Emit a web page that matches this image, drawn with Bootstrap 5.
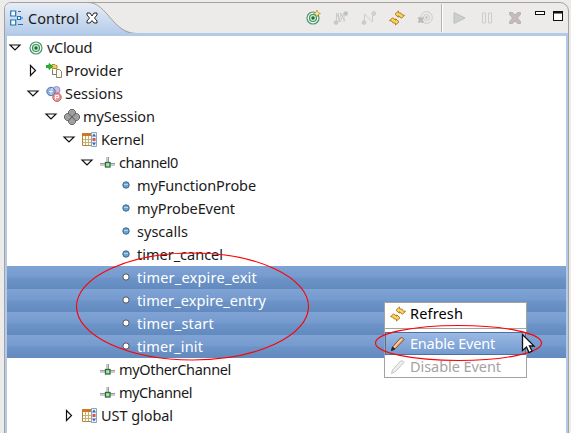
<!DOCTYPE html>
<html lang="en">
<head>
<meta charset="utf-8">
<title>Control</title>
<link href="https://cdn.jsdelivr.net/npm/bootstrap@5.3.0/dist/css/bootstrap.min.css" rel="stylesheet">
<style>
body{width:571px;height:433px;overflow:hidden;background:#edebe9;font:14.5px/23px "Noto Sans","Open Sans",sans-serif;color:#1a1a1a}
svg{display:block;flex:none;overflow:visible}
.frame{width:565px;height:440px;margin:2px 0 0 4px;border:1px solid #a5a19d;border-radius:7px 9px 0 0;overflow:hidden}
.head{height:30px;width:563px}
.tabshape{left:0;top:0}
.tabtext{height:30px;padding:0 0 0 5px}
.tabtext span{margin-left:5px;width:54px}
.tools{padding:0 5px 0 0}
.tools>svg{margin-left:12px}
.sep{width:2px;height:28px;background:#b5b2af;border-right:1px solid #fff;margin:1px 0 0 8px}
.view{border:2px solid #b3c9e8;border-top-width:3px;border-bottom:0;background:#fff;height:410px}
.tree-row{height:23px}
.arrow{width:16px;height:16px;margin-right:5px}
.tree-row span{margin-left:3px;white-space:pre}
.l1{padding-left:18px}.l2{padding-left:36px}.l3{padding-left:54px}.l4{padding-left:72px}.l5{padding-left:90px}
.picked{background:linear-gradient(#80a3d5,#759acd 48%,#6d94c8 52%,#628abf);color:#fff}
.popup{left:384px;top:302px;width:143px;height:76px;background:#fff;border:1px solid #a3a3a3}
.popup .entry{height:23px;padding-left:5px}
.popup .entry:first-child{padding-bottom:2px}
.popup span{margin-left:4px;white-space:pre}
.rule{height:1px;background:#a3a3a3;margin:2px 0 3px}
.hot{background:linear-gradient(#9dbbe5,#7199cf);box-shadow:inset 0 0 0 1px #4d719f;color:#fff}
.dim{color:#a6a39f}
.marks{left:0;top:0;pointer-events:none}
</style>
<script src="https://cdn.jsdelivr.net/npm/bootstrap@5.3.0/dist/js/bootstrap.bundle.min.js"></script>
</head>
<body>
<svg width="0" height="0" class="position-absolute">
<defs>
<linearGradient id="tabfill" x2="0" y2="1"><stop offset="0" stop-color="#e6edf6"/><stop offset="1" stop-color="#b0c8e8"/></linearGradient>
<symbol id="open" viewBox="0 0 16 16"><path d="M3 5H13L8 10Z" fill="#fff" stroke="#111" stroke-width="1.2"/></symbol>
<symbol id="shut" viewBox="0 0 16 16"><path d="M5.500 2.500V12.500L10.500 7.500Z" fill="#fff" stroke="#111" stroke-width="1.2"/></symbol>
<symbol id="target" viewBox="0 0 16 16"><circle cx="8" cy="8" r="6" fill="#f4faf5" stroke="#46976a" stroke-width="1.200"/><circle cx="8" cy="8" r="3.500" fill="#d8ebd3" stroke="#3d9161" stroke-width="1.200"/><circle cx="8" cy="8" r="1.700" fill="#176d2b"/></symbol>
<symbol id="provider" viewBox="0 0 16 16"><path d="M6 1.500h3l1 1h1v3H6Z" fill="#f4cc5e" stroke="#b68a28"/><path d="M0 2.500h3V.5l3.500 3-3.500 3v-2H0Z" fill="#21c426" stroke="#128117" stroke-width=".7"/><path d="M6.500 6.500v5H10" fill="none" stroke="#777"/><path d="M10.500 6.500h3l2 2v6h-5Z" fill="#fbfbf0" stroke="#8a8870"/></symbol>
<symbol id="sessions" viewBox="0 0 16 16"><circle cx="10.500" cy="4" r="3.500" fill="#cdbde5" stroke="#9f8bc8"/><circle cx="5" cy="5.500" r="4.200" fill="#91b0df" stroke="#5276b3"/><path d="M3 5.500h4M5 3h2M5 3.500v5" stroke="#e7effb" fill="none"/><circle cx="11" cy="11.200" r="4.200" fill="#e99c99" stroke="#c75c5d"/><path d="M9.500 13.500V9.500h3v2h-3" fill="none" stroke="#fff"/></symbol>
<symbol id="session" viewBox="0 0 16 16"><g fill="#a0a0a0" stroke="#686868"><path d="M6.500.5h3l2 2v2.500L8 8 4.500 5V2.500ZM6.500 15.500h3l2-2V11L8 8l-3.500 3v2.500ZM.5 6.500v3l2 2H5L8 8 5 4.500H2.500ZM15.500 6.500v3l-2 2H11L8 8l3-3.500h2.500Z"/></g></symbol>
<symbol id="domain" viewBox="0 0 16 16"><path d="M.5 1.500h9v12h-9Z" fill="#fffbe6" stroke="#ad873d"/><path d="M0 1h9v3H0Z" fill="#ca7926"/><path d="M3.500 4v9M6.500 4v9M1 7.500h8M1 10.500h8" stroke="#c3b07f"/><path d="M9.500.5h5v14h-5Z" fill="#eaf4fd" stroke="#8ca6bd"/><path d="M12 1.500l2 3h-4ZM12 13.500l2-3h-4Z" fill="#3166b1"/><path d="M10.500 6h3v3h-3Z" fill="#e05045"/></symbol>
<symbol id="channel" viewBox="0 0 16 16"><path d="M0 8.500h15M0 10h15M7 2v8M8.500 2v8" stroke="#97979c" stroke-width="1"/><rect x="5.500" y="7.500" width="4.500" height="4.500" fill="#b7e2ae" stroke="#26713b" stroke-width="1.300"/></symbol>
<symbol id="event" viewBox="0 0 16 16"><circle cx="8" cy="7" r="3.200" fill="#6ea5cd" stroke="#37658d"/><path d="M6 6.500h4" stroke="#b4d7ec"/></symbol>
<symbol id="idle" viewBox="0 0 16 16"><circle cx="8" cy="7" r="3.100" fill="#fff" stroke="#555"/></symbol>
<symbol id="refresh" viewBox="0 0 16 16"><g fill="#fad566" stroke="#b27c1a"><path d="M6 4.200L9.500 1V2.700Q13 2.700 13.500 5.200H15.500L12.500 8.200 9.300 5.700V7.200Z"/><path d="M10 11.800L6.500 15V13.300Q3 13.300 2.500 10.800H.5L3.500 7.800 6.700 10.300V8.800Z"/></g></symbol>
<symbol id="pencil" viewBox="0 0 16 16"><path d="M2.500 11L10.500 2Q13 1 14 3.500L5.500 12.500 1.500 14.500Z" fill="#efb37b" stroke="#875027"/><path d="M4 11L12 2.500" stroke="#ffe0b7"/><path d="M1.500 14.500l1-3.500 2.500 2Z" fill="#182c52" stroke="#182c52"/></symbol>
<symbol id="graypencil" viewBox="0 0 16 16"><path d="M2.500 11L10.500 2Q13 1 14 3.500L5.500 12.500 1.500 14.500Z" fill="#eeeeec" stroke="#c4c4c2"/></symbol>
</defs></svg>

<main class="frame">
<header class="head position-relative d-flex justify-content-between">
<svg class="tabshape position-absolute" width="563" height="34"><path d="M0 0H83C105 0 105 30 134 30H563V34H0Z" fill="url(#tabfill)" stroke="none"/><path d="M83-.5C102-.5 108 30.500 131 30.500H563" fill="none" stroke="#a5a19d"/></svg>
<div class="tabtext position-relative d-flex align-items-center">
<svg width="13" height="16" fill="#fff" stroke="#1b74b2" stroke-width="1.200"><path d="M.7 1h5v5h-5ZM.7 10h5v5h-5ZM8 1.500h3M8 14.500h5M11 8h2M7.500 6.500h3v3h-3Z"/></svg>
<span data-w="51">Control</span>
<svg width="12" height="12" class="ms-1"><path d="M1 1h3l2 3 2-3h3v2L8.500 6 11 9v2H8L6 8.500 4 11H1V9l2.500-3L1 3Z" fill="#fff" stroke="#222"/></svg>
</div>
<div class="tools position-relative d-flex align-items-center">
<svg width="16" height="16"><use href="#target"/><path d="M12 0l1 2.500L15.500 3.500 13 4.500 12 7 11 4.500 8.500 3.500 11 2.500Z" fill="#fff2b0" stroke="#b89536" stroke-width=".8"/></svg>
<svg width="16" height="16" fill="none" stroke="#c6c8c6" stroke-width=".9"><path d="M3.500 13V3l3.500 9 4-9v9M5.500 3v6M7 3l5 8M8.500 3l-3 9"/><circle cx="3" cy="12.500" r="1.900" fill="#c6cac6"/><circle cx="12.800" cy="3.500" r="1.900" fill="#b8c0ba"/></svg>
<svg width="16" height="16" fill="none" stroke="#c8c8c6" stroke-width=".9"><path d="M3.500 13V4l8 8V3"/><circle cx="3" cy="12.500" r="1.900" fill="#ccc"/><circle cx="12.800" cy="3.500" r="1.900" fill="#dccfd0"/></svg>
<svg width="16" height="16"><use href="#refresh"/></svg>
<svg width="16" height="16" fill="none" stroke="#cbcac8"><circle cx="9.500" cy="7.500" r="5.800"/><circle cx="9.500" cy="7.500" r="3"/><circle cx="9.500" cy="7.500" r="1" fill="#c4c4c4"/><path d="M1.500 7.500l4.500 5M6 7.500l-4.500 5" stroke="#bdb8b7" stroke-width="2.500"/></svg>
<i class="sep align-self-start"></i>
<svg width="16" height="16" class="ms-2"><path d="M3 2.500V13.500L14 8Z" fill="#cbcfcd" stroke="#bbc0bd"/></svg>
<svg width="16" height="16" fill="#ebebe9" stroke="#cdcdcb"><path d="M3.500 3h3v10h-3ZM9.500 3h3v10h-3Z"/></svg>
<svg width="16" height="16"><path d="M2.500 2.500h3L8 5l2.500-2.500h3v2L10.500 8l3 3.500v2h-3L8 11l-2.500 2.500h-3v-2l3-3.500-3-3.500Z" fill="#c4bbbb" stroke="#b8b2b2"/></svg>
<svg width="10" height="16"><rect x=".5" y="1.500" width="9" height="3" fill="#fff" stroke="#111"/></svg>
<svg width="10" height="16" class="ms-2"><rect x=".5" y="1.500" width="9" height="9" fill="#fff" stroke="#111"/><path d="M0 2.500h10" stroke="#111" stroke-width="2"/></svg>
</div>
</header>
<section class="view position-relative">
<div class="tree-row d-flex align-items-center"><svg class="arrow"><use href="#open"/></svg><svg width="16" height="16"><use href="#target"/></svg><span data-w="45">vCloud</span></div>
<div class="tree-row d-flex align-items-center l1"><svg class="arrow"><use href="#shut"/></svg><svg width="16" height="16"><use href="#provider"/></svg><span data-w="58">Provider</span></div>
<div class="tree-row d-flex align-items-center l1"><svg class="arrow"><use href="#open"/></svg><svg width="16" height="16"><use href="#sessions"/></svg><span data-w="58">Sessions</span></div>
<div class="tree-row d-flex align-items-center l2"><svg class="arrow"><use href="#open"/></svg><svg width="16" height="16"><use href="#session"/></svg><span data-w="72">mySession</span></div>
<div class="tree-row d-flex align-items-center l3"><svg class="arrow"><use href="#open"/></svg><svg width="16" height="16"><use href="#domain"/></svg><span data-w="43">Kernel</span></div>
<div class="tree-row d-flex align-items-center l4"><svg class="arrow"><use href="#open"/></svg><svg width="16" height="16"><use href="#channel"/></svg><span data-w="59">channel0</span></div>
<div class="tree-row d-flex align-items-center l5"><i class="arrow"></i><svg width="16" height="16"><use href="#event"/></svg><span data-w="119">myFunctionProbe</span></div>
<div class="tree-row d-flex align-items-center l5"><i class="arrow"></i><svg width="16" height="16"><use href="#event"/></svg><span data-w="98">myProbeEvent</span></div>
<div class="tree-row d-flex align-items-center l5"><i class="arrow"></i><svg width="16" height="16"><use href="#event"/></svg><span data-w="51">syscalls</span></div>
<div class="tree-row d-flex align-items-center l5"><i class="arrow"></i><svg width="16" height="16"><use href="#event"/></svg><span data-w="86">timer_cancel</span></div>
<div class="tree-row d-flex align-items-center l5 picked"><i class="arrow"></i><svg width="16" height="16"><use href="#idle"/></svg><span data-w="120">timer_expire_exit</span></div>
<div class="tree-row d-flex align-items-center l5 picked"><i class="arrow"></i><svg width="16" height="16"><use href="#idle"/></svg><span data-w="129">timer_expire_entry</span></div>
<div class="tree-row d-flex align-items-center l5 picked"><i class="arrow"></i><svg width="16" height="16"><use href="#idle"/></svg><span data-w="77">timer_start</span></div>
<div class="tree-row d-flex align-items-center l5 picked"><i class="arrow"></i><svg width="16" height="16"><use href="#idle"/></svg><span data-w="66">timer_init</span></div>
<div class="tree-row d-flex align-items-center l4"><i class="arrow"></i><svg width="16" height="16"><use href="#channel"/></svg><span data-w="112">myOtherChannel</span></div>
<div class="tree-row d-flex align-items-center l4"><i class="arrow"></i><svg width="16" height="16"><use href="#channel"/></svg><span data-w="73">myChannel</span></div>
<div class="tree-row d-flex align-items-center l3"><svg class="arrow"><use href="#shut"/></svg><svg width="16" height="16"><use href="#domain"/></svg><span data-w="72">UST global</span></div>
</section>
</main>

<div class="popup position-absolute">
<div class="entry d-flex align-items-center"><svg width="16" height="16"><use href="#refresh"/></svg><span class="text-black" data-w="53">Refresh</span></div>
<div class="rule"></div>
<div class="entry d-flex align-items-center hot"><svg width="16" height="16"><use href="#pencil"/></svg><span data-w="85">Enable Event</span></div>
<div class="entry d-flex align-items-center dim"><svg width="16" height="16"><use href="#graypencil"/></svg><span data-w="91">Disable Event</span></div>
</div>
<svg class="marks position-absolute" width="571" height="433"><g fill="none" stroke="#f00" stroke-width="1.100"><ellipse cx="192.500" cy="306.500" rx="116" ry="53.500"/><ellipse cx="458.500" cy="343" rx="83" ry="17.500"/></g><path d="M522.500 334.500v16l4-3.500 2.500 5.500 3-1.500-2.500-5h4.500Z" fill="#fff" stroke="#111" stroke-width="1.300"/></svg>
<script>
// Tune letter spacing so every label fills its design width
document.querySelectorAll('[data-w]').forEach(function(s){
  var w = s.firstChild, r = document.createRange();
  r.selectNodeContents(s);
  s.style.letterSpacing = ((s.dataset.w - r.getBoundingClientRect().width) / w.length) + 'px';
});
</script>
</body>
</html>
